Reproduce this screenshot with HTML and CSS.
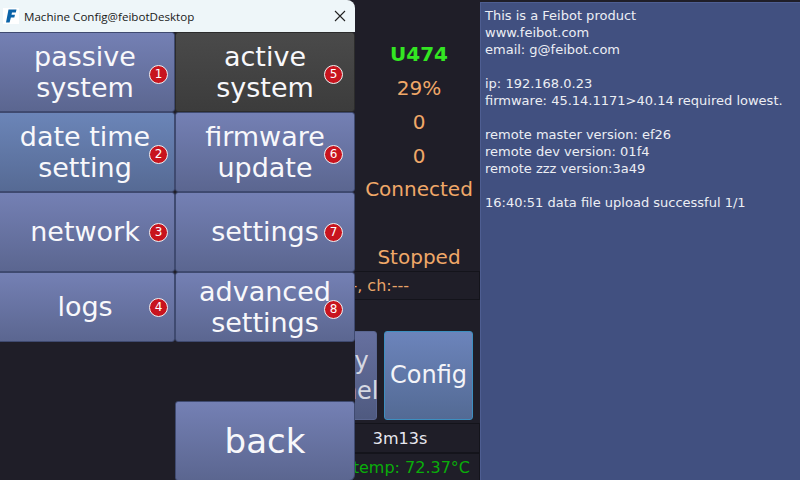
FILE: index.html
```html
<!DOCTYPE html>
<html lang="en">
<head>
<meta charset="utf-8">
<title>Machine Config</title>
<link rel="stylesheet" href="styles.css">
</head>
<body>
<div class="app">
  <main class="main">
    <div class="status">
      <div class="stat stat-id">U474</div>
      <div class="stat">29%</div>
      <div class="stat">0</div>
      <div class="stat stat-tight">0</div>
      <div class="stat">Connected</div>
      <div class="stat"></div>
      <div class="stat stat-short">Stopped</div>
    </div>
    <div class="lower">
      <div class="row row-ch"><span class="ch-text">---, ch:---</span></div>
      <div class="actions">
        <button class="act act-dim">Display<br>Channel</button>
        <button class="act act-config">Config</button>
      </div>
      <div class="row row-time">3m13s</div>
      <div class="row row-temp">temp: 72.37°C</div>
    </div>
  </main>
  <aside class="info">
    <p>This is a Feibot product</p>
    <p>www.feibot.com</p>
    <p>email: g@feibot.com</p>
    <p>&nbsp;</p>
    <p>ip: 192.168.0.23</p>
    <p>firmware: 45.14.1171&gt;40.14 required lowest.</p>
    <p>&nbsp;</p>
    <p>remote master version: ef26</p>
    <p>remote dev version: 01f4</p>
    <p>remote zzz version:3a49</p>
    <p>&nbsp;</p>
    <p>16:40:51 data file upload successful 1/1</p>
  </aside>
  <section class="window">
    <header class="titlebar">
      <svg class="logo" viewBox="0 0 16 16" aria-hidden="true">
        <rect width="16" height="16" fill="#ffffff"/>
        <path d="M5.5 1.5H13.5L12.8 4.5H9L8.5 6.8H12L11.3 9.5H7.9L6.6 14.5H3Z" fill="#0b63a8"/>
      </svg>
      <span class="title">Machine Config@feibotDesktop</span>
      <svg class="close" viewBox="0 0 12 12" aria-hidden="true">
        <path d="M1 1L11 11M11 1L1 11" stroke="#222" stroke-width="1.1" fill="none"/>
      </svg>
    </header>
    <div class="menu">
      <button class="btn">passive<br>system<span class="badge badge-low">1</span></button>
      <button class="btn btn-active">active<br>system<span class="badge badge-low">5</span></button>
      <button class="btn btn-hover">date time<br>setting<span class="badge badge-low">2</span></button>
      <button class="btn">firmware<br>update<span class="badge badge-low">6</span></button>
      <button class="btn btn-single">network<span class="badge">3</span></button>
      <button class="btn btn-single">settings<span class="badge">7</span></button>
      <button class="btn btn-single">logs<span class="badge">4</span></button>
      <button class="btn">advanced<br>settings<span class="badge badge-low">8</span></button>
    </div>
    <div class="footer">
      <button class="btn btn-back">back</button>
    </div>
  </section>
</div>
</body>
</html>
```

FILE: styles.css
```css
* { box-sizing: border-box; }
html, body { margin: 0; padding: 0; }
body {
  width: 800px;
  height: 480px;
  overflow: hidden;
  background: #1f1e28;
  font-family: "DejaVu Sans", sans-serif;
}
p { margin: 0; }
button { font-family: inherit; padding: 0; }

.app {
  position: relative;
  display: flex;
  width: 800px;
  height: 480px;
}

.main {
  width: 480px;
  display: flex;
  flex-direction: column;
  align-items: flex-end;
}
.status {
  width: 122px;
  padding-top: 37px;
  color: #f0a868;
  font-size: 20px;
  text-align: center;
}
.stat {
  height: 34px;
  line-height: 34px;
}
.stat-tight { height: 33px; }
.stat-short { height: 31px; line-height: 34px; }
.stat-id { color: #33e622; font-weight: 700; }

.lower {
  width: 160px;
  height: 210px;
  display: flex;
  flex-direction: column;
}
.row {
  border: 1px solid #14141b;
  font-size: 16px;
  display: flex;
  align-items: center;
}
.row-ch {
  height: 29px;
  justify-content: flex-end;
  padding-right: 70px;
  color: #e8a468;
}
.actions {
  display: flex;
  justify-content: flex-end;
  gap: 7px;
  padding: 31px 7px 0 0;
  height: 123px;
}
.act {
  height: 89px;
  color: #f4f4f8;
  font-size: 24px;
  line-height: 30px;
  border-radius: 3px;
}
.act-dim {
  width: 98px;
  flex: none;
  padding-right: 7px;
  border: 1px solid #5a6690;
  background: linear-gradient(#66709f, #4f5a80);
  color: #d6d8e2;
}
.act-config {
  width: 89px;
  flex: none;
  padding-bottom: 2px;
  border: 1px solid #3d8fc0;
  background: linear-gradient(#6c84bb, #536a94);
}
.row-time {
  height: 30px;
  justify-content: center;
  color: #e8e8f0;
}
.row-temp {
  height: 28px;
  justify-content: flex-end;
  padding-right: 9px;
  color: #0aad0a;
}

.info {
  flex: 1;
  margin-top: 2px;
  padding: 4px 4px 0;
  background: #415080;
  border-left: 1px solid #4e5e92;
  border-top: 1px solid #4e5e92;
  color: #eceef4;
  font-size: 13px;
  line-height: 17px;
}

.window {
  position: absolute;
  left: 0;
  top: 0;
  width: 355px;
  height: 480px;
  display: flex;
  flex-direction: column;
  overflow: hidden;
  background: #1f1e28;
  border-radius: 0 8px 0 0;
}
.titlebar {
  height: 32px;
  flex: none;
  display: flex;
  align-items: center;
  padding: 0 9px 0 3px;
  background: #eef6f9;
  color: #1a1a1a;
  font-family: "Open Sans", sans-serif;
  font-size: 11.6px;
}
.logo { width: 16px; height: 16px; flex: none; }
.title { margin-left: 5px; flex: 1; }
.close { width: 12px; height: 12px; flex: none; }

.menu {
  margin-left: -5px;
  display: grid;
  grid-template-columns: 180px 180px;
  grid-template-rows: 80px 80px 80px 70px;
}
.btn {
  position: relative;
  border: 1px solid #3f4a70;
  border-radius: 3px;
  background: linear-gradient(#7480b4, #5b6690);
  color: #f8f8fb;
  font-size: 27px;
  line-height: 31px;
  text-align: center;
}
.btn-single { padding-bottom: 2px; }
.btn-active {
  background: linear-gradient(#4a4a4a, #3c3c3c);
  border-color: #2c2c2c;
}
.btn-hover { background: linear-gradient(#6b85b8, #566a94); }
.badge {
  position: absolute;
  right: 6px;
  top: 50%;
  width: 19px;
  height: 19px;
  margin-top: -9px;
  border-radius: 50%;
  border: 1px solid #f2f2f2;
  background: #c8141e;
  color: #ffffff;
  font-size: 12px;
  line-height: 17px;
  text-align: center;
}
.btn:nth-child(even) .badge { right: 11px; }
.badge-low { margin-top: -7px; }
.footer {
  margin-top: 59px;
  display: flex;
  justify-content: flex-end;
}
.btn-back {
  width: 180px;
  height: 80px;
  font-size: 34px;
  border-radius: 3px 3px 6px 3px;
}
```
